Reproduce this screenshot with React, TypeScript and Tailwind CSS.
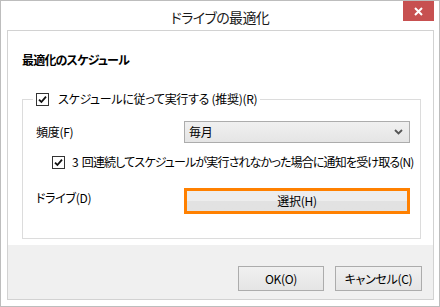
import React from 'react';

const font = "font-['Noto_Sans_CJK_JP',sans-serif] [font-feature-settings:'palt']";

function Check({ className = '' }: { className?: string }) {
  return (
    <span className={`flex h-[13px] w-[13px] shrink-0 items-center justify-center border border-[#333333] bg-white ${className}`}>
      <svg width="9" height="9" viewBox="0 0 9 9">
        <path d="M1 4.6 L3.4 7 L8 1.6" fill="none" stroke="#111" strokeWidth="1.8" />
      </svg>
    </span>
  );
}

function FooterButton({ label, width }: { label: string; width: string }) {
  return (
    <button className={`flex h-[25px] ${width} items-center justify-center border border-[#acacac] bg-gradient-to-b from-[#f0f0f0] to-[#e5e5e5] text-[12px] tracking-[-0.3px] text-black`}>
      {label}
    </button>
  );
}

export default function App() {
  return (
    <div className={`flex h-[307px] w-[440px] flex-col border border-[#bdbdbd] bg-white text-black ${font}`}>
      {/* Title bar */}
      <div className="flex h-[29px] items-start">
        <div className="w-[36px]" />
        <div className="flex-1 pt-[6px] text-center text-[14px] leading-[20px] tracking-[-0.6px] text-[#1a1a1a]">ドライブの最適化</div>
        <div className="mr-[5px] flex h-[20px] w-[31px] items-center justify-center bg-[#c75050]">
          <svg width="9" height="9" viewBox="0 0 9 9">
            <path d="M1 1 L8 8 M8 1 L1 8" stroke="white" strokeWidth="2" />
          </svg>
        </div>
      </div>

      {/* Client area */}
      <div className="ml-[6px] flex h-[270px] w-[427px] flex-col border border-[#d2d2d2]">
        <div className="h-[214px] bg-white pl-[14px] pt-[21px] text-[12px] tracking-[-0.3px]">
          <div className="h-[16px] font-bold leading-[16px] tracking-[-0.8px]">最適化のスケジュール</div>

          <fieldset className="mt-[23px] h-[148px] w-[399px] border border-[#dcdcdc] pl-[13px]">
            <legend className="-ml-[3px] px-[3px]">
              <div className="flex h-[16px] items-center gap-[9px] leading-[16px]">
                <Check />
                <span>スケジュールに従って実行する (推奨)(R)</span>
              </div>
            </legend>

            <div className="mt-[14px] flex h-[22px] items-center">
              <span className="w-[148px]">頻度(F)</span>
              <div className="flex h-[22px] w-[226px] items-center justify-between border border-[#acacac] bg-gradient-to-b from-[#f0f0f0] to-[#e5e5e5] pl-[4px] pr-[6px]">
                <span>毎月</span>
                <svg width="9" height="6" viewBox="0 0 9 6">
                  <path d="M1 1 L4.5 4.5 L8 1" fill="none" stroke="#555" strokeWidth="1.8" />
                </svg>
              </div>
            </div>

            <div className="ml-[16px] mt-[11px] flex h-[16px] items-center gap-[7px] whitespace-nowrap tracking-[-0.85px]">
              <Check />
              <span>
                3<span className="ml-[4px]">回連続してスケジュールが実行されなかった場合に通知を受け取る(N)</span>
              </span>
            </div>

            <div className="mt-[18px] flex h-[26px] items-start">
              <span className="w-[148px] pt-[1px]">ドライブ(D)</span>
              <div className="h-[26px] w-[226px] border-[3px] border-[#ff8000]">
                <div className="flex h-full items-center justify-center bg-gradient-to-b from-[#ededed] from-50% to-[#e2e2e2] to-50%">
                  選択(H)
                </div>
              </div>
            </div>
          </fieldset>
        </div>

        <div className="flex flex-1 items-start justify-end gap-[11px] bg-[#f0f0f0] pr-[11px] pt-[21px]">
          <FooterButton label="OK(O)" width="w-[86px]" />
          <FooterButton label="キャンセル(C)" width="w-[87px]" />
        </div>
      </div>
    </div>
  );
}
